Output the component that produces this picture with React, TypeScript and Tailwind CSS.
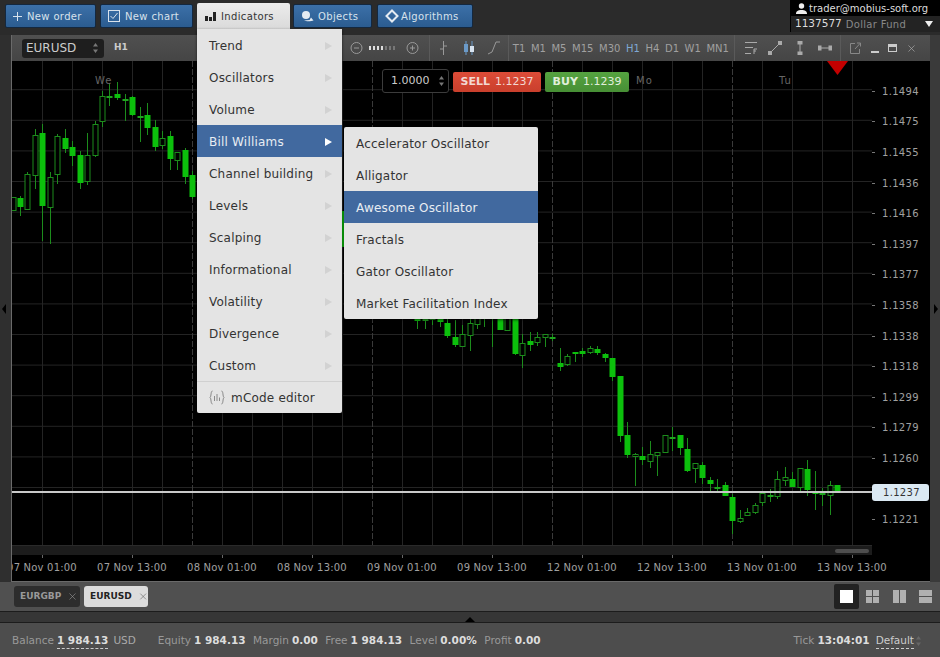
import { X } from "lucide-react";

const sans = "font-['DejaVu_Sans',sans-serif]";

// [x, wick top, wick bottom, body top, body bottom, filled]
const candles: [number, number, number, number, number, number][] = [
  [13, 198, 212, 198, 212, 0], [20, 197, 217, 199, 208, 1], [27, 173, 211, 175, 211, 0], [35, 130, 190, 136, 177, 0],
  [42, 125, 242, 134, 207, 1], [50, 173, 245, 178, 209, 0], [57, 135, 185, 137, 176, 0], [65, 130, 154, 139, 150, 1],
  [72, 142, 167, 148, 157, 1], [80, 152, 190, 156, 184, 1], [87, 134, 186, 156, 183, 0], [95, 122, 158, 125, 157, 0],
  [102, 92, 128, 97, 123, 0], [109, 85, 107, 97, 98, 1], [117, 83, 101, 95, 99, 1], [125, 95, 122, 100, 101, 1],
  [132, 97, 117, 98, 116, 1], [140, 108, 143, 117, 118, 1], [147, 104, 136, 116, 129, 1], [155, 121, 152, 128, 148, 1],
  [162, 132, 150, 139, 147, 0], [170, 132, 171, 137, 160, 1], [177, 153, 171, 153, 162, 0], [185, 149, 185, 151, 178, 1],
  [192, 172, 200, 176, 198, 1], [342, 212, 248, 212, 248, 1],
  [417, 310, 330, 310, 322, 1], [425, 310, 330, 320, 321, 1], [432, 310, 326, 310, 321, 0], [440, 310, 328, 319, 323, 1],
  [447, 320, 339, 324, 337, 1], [455, 321, 348, 338, 346, 1], [462, 326, 348, 335, 348, 0], [470, 318, 352, 324, 337, 0],
  [477, 310, 330, 318, 326, 0], [484, 312, 328, 318, 319, 1], [492, 312, 348, 318, 319, 1], [500, 312, 331, 312, 331, 1],
  [507, 312, 332, 312, 332, 0], [515, 312, 356, 312, 355, 1], [522, 335, 369, 344, 357, 0], [530, 333, 352, 342, 346, 1],
  [537, 333, 347, 338, 344, 0], [545, 335, 348, 335, 339, 0], [552, 335, 342, 338, 339, 1], [560, 349, 372, 364, 368, 1],
  [567, 355, 367, 357, 366, 0], [575, 354, 363, 353, 355, 1], [582, 349, 358, 352, 355, 1], [590, 347, 355, 349, 354, 0],
  [597, 347, 356, 350, 354, 1], [605, 354, 363, 355, 359, 1], [612, 359, 382, 359, 378, 1], [620, 377, 443, 377, 437, 1],
  [627, 423, 459, 436, 456, 1], [635, 454, 487, 455, 458, 0], [642, 448, 466, 457, 461, 1], [650, 442, 469, 455, 463, 0],
  [657, 453, 477, 453, 457, 0], [665, 436, 454, 436, 454, 0], [672, 428, 452, 438, 439, 1], [680, 436, 456, 436, 449, 1],
  [687, 439, 473, 450, 472, 1], [695, 464, 484, 464, 470, 0], [702, 463, 485, 466, 479, 1], [710, 478, 493, 481, 485, 1],
  [717, 480, 492, 488, 489, 1], [725, 483, 497, 486, 497, 1], [732, 495, 535, 498, 522, 1], [740, 511, 524, 519, 523, 0],
  [747, 509, 517, 513, 517, 0], [755, 504, 515, 506, 514, 0], [762, 492, 507, 494, 504, 0], [770, 490, 503, 496, 497, 1],
  [777, 472, 500, 480, 498, 0], [785, 468, 487, 478, 482, 0], [792, 473, 488, 480, 488, 1], [800, 469, 492, 469, 489, 0],
  [807, 461, 497, 470, 491, 1], [815, 472, 511, 493, 495, 1], [822, 489, 507, 494, 495, 1], [830, 482, 516, 486, 497, 0],
  [837, 486, 492, 486, 492, 1],
];

const prices = ["1.1494", "1.1475", "1.1455", "1.1436", "1.1416", "1.1397", "1.1377", "1.1358", "1.1338", "1.1318", "1.1299", "1.1279", "1.1260", "", "1.1221"];
const times = ["07 Nov 01:00", "07 Nov 13:00", "08 Nov 01:00", "08 Nov 13:00", "09 Nov 01:00", "09 Nov 13:00", "12 Nov 01:00", "12 Nov 13:00", "13 Nov 01:00", "13 Nov 13:00"];
const periods = ["T1", "M1", "M5", "M15", "M30", "H1", "H4", "D1", "W1", "MN1"];
const mainMenu = ["Trend", "Oscillators", "Volume", "Bill Williams", "Channel building", "Levels", "Scalping", "Informational", "Volatility", "Divergence", "Custom"];
const subMenu = ["Accelerator Oscillator", "Alligator", "Awesome Oscillator", "Fractals", "Gator Oscillator", "Market Facilitation Index"];

function TopButton({ icon, label, width }: { icon: React.ReactNode; label: string; width: string }) {
  return (
    <div className={`${width} h-[24px] flex items-center gap-[5px] pl-[7px] rounded-[2px] border border-[#14283f] bg-gradient-to-b from-[#3c70a8] to-[#2b5c90] text-[#d8e2ec] text-[10px] tracking-[0.35px]`}>
      {icon}
      <span>{label}</span>
    </div>
  );
}

function Stepper({ className }: { className: string }) {
  return (
    <svg width="7" height="12" viewBox="0 0 7 12" className={className}>
      <path d="M3.5 1 6 4.5H1z M3.5 11 6 7.5H1z" fill="currentColor" />
    </svg>
  );
}

function ChartCanvas() {
  const verticals = Array.from({ length: 29 }, (_, i) => 30 + i * 30);
  const horizontals = Array.from({ length: 16 }, (_, i) => 29 + i * 30.6);
  return (
    <svg width="860" height="484" viewBox="12 62 860 484" className="block">
      <rect x="12" y="62" width="860" height="484" fill="#000" />
      {horizontals.map((y) => (
        <line key={y} x1="12" x2="872" y1={y + 0.5} y2={y + 0.5} stroke="#242424" />
      ))}
      {verticals.map((v) => {
        const x = v + 12;
        const major = (x - 12) % 180 === 0;
        return <line key={v} x1={x + 0.5} x2={x + 0.5} y1="62" y2="546" stroke={major ? "#3a3a3a" : "#242424"} strokeDasharray={major ? "6 2" : undefined} />;
      })}
      {candles.map(([x, top, bottom, bodyTop, bodyBottom, filled]) => (
        <g key={x}>
          <line x1={x + 0.5} x2={x + 0.5} y1={top} y2={bottom} stroke="#1c8c1c" />
          {bodyBottom - bodyTop < 2 ? (
            <rect x={x - 2.5} y={bodyTop} width="6" height="2" fill="#1fa51f" />
          ) : filled ? (
            <rect x={x - 2.5} y={bodyTop} width="6" height={bodyBottom - bodyTop} fill="#0cc00c" />
          ) : (
            <rect x={x - 2} y={bodyTop + 0.5} width="5" height={bodyBottom - bodyTop - 1} fill="#000" stroke="#1c8c1c" />
          )}
        </g>
      ))}
      <rect x="12" y="492" width="860" height="2" fill="#c8c8c8" />
      <path d="M827 62h21l-10.5 14z" fill="#c40000" />
    </svg>
  );
}

function Toolbar() {
  return (
    <div className="h-[26px] flex items-center bg-gradient-to-b from-[#505050] to-[#454545] text-[#aaa] text-[10px]">
      <div className={`ml-[10px] w-[82px] h-[19px] rounded-[3px] bg-[#1e1e1e] flex items-center justify-between px-[4px] text-[12px] text-[#ccc] ${sans}`}>
        <span>EURUSD</span>
        <Stepper className="text-[#777] mr-[1px]" />
      </div>
      <span className={`ml-[10px] font-bold text-[9px] text-[#ccc] ${sans}`}>H1</span>
      {/* the part under the open menu stays empty */}
      <div className="w-[215px]" />
      <svg width="76" height="16" viewBox="0 0 76 16" className="ml-[6px] text-[#999]" fill="none" stroke="currentColor">
        <circle cx="7.5" cy="8" r="5.5" />
        <path d="M5 8h5" />
        <circle cx="63.5" cy="8" r="5.5" />
        <path d="M61 8h5M63.5 5.5v5" />
        <path d="M21 6v4M25 6v4M29 6v4M33 6v4" stroke="#ddd" strokeWidth="2" />
        <path d="M37 6v4M41 6v4M45 6v4" stroke="#777" strokeWidth="2" />
      </svg>
      <div className="ml-[4px] w-px h-[26px] bg-[#5a5a5a]" />
      <svg width="14" height="16" viewBox="0 0 14 16" className="ml-[6px] text-[#999]" fill="none" stroke="currentColor">
        <path d="M7.5 1v14M4 9h3.5M7.5 6H11" />
      </svg>
      <svg width="12" height="16" viewBox="0 0 12 16" className="ml-[13px]">
        <path d="M3 1v14M9 1v14" stroke="#6b9ac8" />
        <rect x="1" y="4" width="4" height="8" fill="#6b9ac8" />
        <rect x="7" y="6" width="4" height="6" fill="#d8e4f0" />
      </svg>
      <svg width="14" height="16" viewBox="0 0 14 16" className="ml-[12px] text-[#999]" fill="none" stroke="currentColor">
        <path d="M1 14 5 12 9 2 13 2" />
      </svg>
      <div className="ml-[7px] w-px h-[26px] bg-[#5a5a5a]" />
      <div className={`ml-[4px] flex items-center gap-[5.6px] text-[10px] text-[#a0a0a0] ${sans}`}>
        {periods.map((p) => (
          <span key={p} className={p === "H1" ? "text-[#7fa8d4]" : ""}>{p}</span>
        ))}
      </div>
      <div className="ml-[5px] w-px h-[26px] bg-[#5a5a5a]" />
      <svg width="14" height="14" viewBox="0 0 14 14" className="ml-[9px] text-[#aaa]" fill="none" stroke="currentColor">
        <path d="M1 1.5h12M1 6.5h8M1 12.5h6M10 8v5M10 8h3M10 10h2" />
      </svg>
      <svg width="14" height="14" viewBox="0 0 14 14" className="ml-[10px] text-[#aaa]" fill="none" stroke="currentColor">
        <path d="M2 12 12 2" />
        <rect x="0.5" y="10.5" width="3" height="3" fill="currentColor" />
        <rect x="10.5" y="0.5" width="3" height="3" fill="currentColor" />
      </svg>
      <svg width="6" height="14" viewBox="0 0 6 14" className="ml-[15px] text-[#aaa]" fill="none" stroke="currentColor">
        <path d="M3 2v10" />
        <rect x="1" y="0.5" width="4" height="2.5" fill="currentColor" />
        <rect x="1" y="11" width="4" height="2.5" fill="currentColor" />
      </svg>
      <svg width="14" height="6" viewBox="0 0 14 6" className="ml-[15px] text-[#aaa]" fill="none" stroke="currentColor">
        <path d="M2 3h10" />
        <rect x="0.5" y="1" width="2.5" height="4" fill="currentColor" />
        <rect x="11" y="1" width="2.5" height="4" fill="currentColor" />
      </svg>
      <div className="ml-[8px] w-px h-[26px] bg-[#5a5a5a]" />
      <svg width="11" height="12" viewBox="0 0 11 12" className="ml-[9px] text-[#888]" fill="none" stroke="currentColor">
        <path d="M5 1.5H.5v10h9V7M5 7l5-5.5M7 1h3.5v3.5" />
      </svg>
      <div className="ml-[10px] w-[8px] h-[2px] bg-[#ccc] mt-[7px]" />
      <div className="ml-[9px] w-[9px] h-[8px] border border-t-[3px] border-[#ccc]" />
      <X size={11} strokeWidth={1.5} className="ml-[9px] text-[#aaa]" />
    </div>
  );
}

function IndicatorMenu() {
  return (
    <>
      <div className={`absolute left-[197px] top-[29px] w-[145px] bg-[#e4e4e4] text-[#333] text-[12px] tracking-[0.2px] rounded-b-[2px] shadow-[0_1px_3px_rgba(0,0,0,0.6)] ${sans}`}>
        {mainMenu.map((item) => {
          const active = item === "Bill Williams";
          return (
            <div key={item} className={`h-[32px] pt-[1px] flex items-center justify-between pl-[12px] pr-[10px] ${active ? "bg-[#41699f] text-[#e8edf3]" : ""}`}>
              <span>{item}</span>
              <span className={`w-0 h-0 border-y-[4px] border-y-transparent border-l-[7px] ${active ? "border-l-white" : "border-l-[#d2d2d2]"}`} />
            </div>
          );
        })}
        <div className="h-[32px] border-t border-[#d0d0d0] flex items-center pl-[12px] gap-[6px]">
          <svg width="16" height="15" viewBox="0 0 16 15" fill="none" stroke="#8a8a8a">
            <path d="M3.5 1C1.5 1 2.5 6.5 1 7.5 2.5 8.5 1.5 14 3.5 14M12.5 1C14.5 1 13.5 6.5 15 7.5 13.5 8.5 14.5 14 12.5 14M5.5 6v5M8 4v7M10.500 7.500V11" />
          </svg>
          <span>mCode editor</span>
        </div>
      </div>
      <div className={`absolute left-[344px] top-[127px] w-[194px] bg-[#e4e4e4] text-[#333] text-[12px] tracking-[0.2px] rounded-[2px] shadow-[0_1px_3px_rgba(0,0,0,0.6)] ${sans}`}>
        {subMenu.map((item) => (
          <div key={item} className={`h-[32px] pt-[1px] flex items-center pl-[12px] ${item === "Awesome Oscillator" ? "bg-[#41699f] text-[#e8edf3]" : ""}`}>
            {item}
          </div>
        ))}
      </div>
    </>
  );
}

function OrderPanel() {
  return (
    <div className={`absolute left-[382px] top-[69px] flex items-center gap-[4px] text-[11px] ${sans}`}>
      <div className="w-[67px] h-[24px] rounded-[3px] bg-black border border-[#3c3c3c] flex items-center justify-between pl-[8px] pr-[3px] text-[#ccc]">
        <span>1.0000</span>
        <Stepper className="text-[#777]" />
      </div>
      <div className="mt-[2px] w-[88px] h-[20px] rounded-[2px] bg-gradient-to-b from-[#dd4c38] to-[#c93f2c] text-[#f2d8d2] flex items-center justify-center gap-[5px]">
        <b>SELL</b><span>1.1237</span>
      </div>
      <div className="mt-[2px] w-[84px] h-[20px] rounded-[2px] bg-gradient-to-b from-[#55a340] to-[#478f35] text-[#e0eedb] flex items-center justify-center gap-[5px]">
        <b>BUY</b><span>1.1239</span>
      </div>
    </div>
  );
}

function Stat({ label, value }: { label: string; value: string }) {
  return (
    <span className="flex items-baseline gap-[3px]">
      <span className="text-[#999]">{label}</span>
      <b className="text-[#ddd]">{value}</b>
    </span>
  );
}

export default function App() {
  return (
    <div className={`relative w-[940px] h-[657px] overflow-hidden bg-[#2b2b2b] flex flex-col ${sans}`}>
      {/* top bar */}
      <div className="h-[35px] flex shrink-0">
        <div className="flex-1 flex pl-[5px] pt-[4px]">
          <TopButton
            width="w-[91px]"
            label="New order"
            icon={<svg width="9" height="9" viewBox="0 0 9 9" stroke="#d8e2ec"><path d="M4.5 0v9M0 4.500h9" /></svg>}
          />
          <div className="ml-[4px]">
            <TopButton
              width="w-[93px]"
              label="New chart"
              icon={<svg width="12" height="12" viewBox="0 0 12 12" fill="none" stroke="#d8e2ec"><rect x=".5" y=".5" width="11" height="11" /><path d="M2.500 6 5 8.500 9.500 3" /></svg>}
            />
          </div>
          <div className="ml-[4px] w-[93px] h-[26px] -mt-[1px] flex items-center gap-[5px] pl-[8px] bg-gradient-to-b from-[#ececec] to-[#dadada] rounded-t-[2px] text-[#333] text-[10px] tracking-[0.35px]">
            <svg width="11" height="9" viewBox="0 0 11 9" fill="#222"><path d="M0 4h3v5H0zM4 5h3v4H4zM8 0h3v9H8z" /></svg>
            <span>Indicators</span>
          </div>
          <div className="ml-[3px]">
            <TopButton
              width="w-[79px]"
              label="Objects"
              icon={<svg width="13" height="12" viewBox="0 0 13 12" fill="#e4ebf2" className="-mr-[1px]"><circle cx="5" cy="5" r="4" /><path d="M3 10.500c2 1 7 1 9.500 0L10 7.500 8.500 10z" /></svg>}
            />
          </div>
          <div className="ml-[5px]">
            <TopButton
              width="w-[96px]"
              label="Algorithms"
              icon={<svg width="14" height="14" viewBox="0 0 14 14" fill="none" stroke="#e4ebf2" strokeWidth="2" className="-mr-[3px]"><path d="M7 1.500 12.500 7 7 12.500 1.500 7z" /></svg>}
            />
          </div>
        </div>
        <div className="w-[150px] h-[32px] border-l border-black whitespace-nowrap">
          <div className="h-[16px] bg-black flex items-center gap-[2px] pl-[5px] text-[10px] text-[#ddd]">
            <svg width="11" height="11" viewBox="0 0 11 11" fill="#eee"><circle cx="5.500" cy="3" r="2.700" /><path d="M0 11c0-3 2-4 5.500-4s5.500 1 5.500 4z" /></svg>
            <span>trader@mobius-soft.org</span>
          </div>
          <div className="h-[16px] bg-[#232323] flex items-center pl-[4px] pr-[7px]">
            <span className="text-[10.5px] text-[#ddd]">1137577</span>
            <span className="ml-[4px] text-[10px] text-[#888] tracking-[0.3px]">Dollar Fund</span>
            <span className="ml-auto w-0 h-0 border-x-[4px] border-x-transparent border-t-[6px] border-t-[#eee]" />
          </div>
        </div>
      </div>

      {/* chart window with its two side strips */}
      <div className="h-[547px] flex shrink-0">
        <div className="w-[11px] bg-[#2f2f2f] flex items-center">
          <span className="w-0 h-0 border-y-[5px] border-y-transparent border-r-[4px] border-r-black ml-[2px]" />
        </div>
        <div className="w-[919px] border-l border-[#6a6a6a] border-b flex flex-col bg-black">
          <Toolbar />
          <div className="flex h-[484px]">
            <ChartCanvas />
            <div className="flex-1 pt-[15px] text-[10px] text-[#a0a0a0] tracking-[0.3px] overflow-hidden">
              {prices.map((price, i) => (
                <div key={i} className="h-[30.6px] flex items-center gap-[5px]">
                  <span className={`w-[3px] h-px ${price ? "bg-[#777]" : ""}`} />
                  <span className="ml-[2px]">{price}</span>
                </div>
              ))}
            </div>
          </div>
          <div className="h-[10px] bg-[#1c1c1c] w-[860px] flex items-center justify-end pr-[3px] border-t border-[#2a2a2a]">
            <div className="w-[34px] h-[4px] rounded-full bg-[#4e4e4e]" />
          </div>
          <div className="h-[24px] overflow-hidden">
            <div className="flex -ml-[15px] text-[10px] text-[#a0a0a0] tracking-[0.2px]">
              {times.map((t) => (
                <div key={t} className="w-[90px] shrink-0 flex flex-col items-center">
                  <span className="w-px h-[3px] bg-[#666]" />
                  <span className="mt-[2px] whitespace-nowrap">{t}</span>
                </div>
              ))}
            </div>
          </div>
        </div>
        <div className="flex-1 bg-[#3a3a3a] flex items-center">
          <span className="w-0 h-0 border-y-[5px] border-y-transparent border-l-[4px] border-l-black ml-[4px]" />
        </div>
      </div>

      {/* tabs */}
      <div className="h-[29px] shrink-0 bg-[#505050] flex items-center pl-[14px] pr-[8px] text-[9px] font-bold">
        <div className="w-[66px] h-[21px] rounded-[3px] bg-[#2d2d2d] text-[#999] flex items-center pl-[6px] gap-[6px]">
          EURGBP <X size={11} strokeWidth={1.3} />
        </div>
        <div className="ml-[4px] w-[64px] h-[21px] rounded-[3px] bg-[#dcdcdc] text-[#222] flex items-center pl-[6px] gap-[6px]">
          EURUSD <X size={11} strokeWidth={1.3} className="text-[#555]" />
        </div>
        <div className="ml-auto w-[25px] h-[25px] rounded-[2px] bg-[#222] flex items-center justify-center">
          <div className="w-[13px] h-[13px] bg-white" />
        </div>
        <svg width="13" height="13" viewBox="0 0 13 13" fill="#b0b0b0" className="ml-[7px]"><path d="M0 0h6v6H0zM7 0h6v6H7zM0 7h6v6H0zM7 7h6v6H7z" /></svg>
        <svg width="13" height="13" viewBox="0 0 13 13" fill="#b0b0b0" className="ml-[14px]"><path d="M0 0h6v13H0zM7 0h6v13H7z" /></svg>
        <svg width="13" height="13" viewBox="0 0 13 13" fill="#b0b0b0" className="ml-[13px]"><path d="M0 0h13v6H0zM0 7h13v6H0z" /></svg>
      </div>

      {/* divider with collapse arrow */}
      <div className="h-[12px] shrink-0 bg-[#363636] border-y border-[#1c1c1c] flex justify-center items-end">
        <span className="w-0 h-0 border-x-[5px] border-x-transparent border-b-[5px] border-b-black" />
      </div>

      {/* status bar */}
      <div className="flex-1 bg-[#4d4d4d] flex items-center pt-[2px] pl-[12px] pr-[18px] text-[10.5px]">
        <span className="flex items-baseline gap-[3px] mr-[22px]">
          <span className="text-[#999]">Balance</span>
          <b className="text-[#ddd] border-b border-dashed border-[#ccc]">1 984.13</b>
          <span className="text-[#aaa] ml-[2px]">USD</span>
        </span>
        <span className="flex gap-[7.5px]">
          <Stat label="Equity" value="1 984.13" />
          <Stat label="Margin" value="0.00" />
          <Stat label="Free" value="1 984.13" />
          <Stat label="Level" value="0.00%" />
          <Stat label="Profit" value="0.00" />
        </span>
        <span className="ml-auto flex items-baseline gap-[6px]">
          <Stat label="Tick" value="13:04:01" />
          <span className="text-[#ccc] border-b border-dashed border-[#ccc]">Default</span>
        </span>
        <Stepper className="ml-[1px] text-[#666]" />
      </div>

      {/* overlays */}
      <OrderPanel />
      <div className="absolute left-[95px] top-[73px] text-[10px] text-[#666] tracking-[1px]">We</div>
      <div className="absolute left-[636px] top-[73px] text-[10px] text-[#666] tracking-[1px]">Mo</div>
      <div className="absolute left-[779px] top-[73px] text-[10px] text-[#666] tracking-[1px]">Tu</div>
      <div className="absolute left-[872px] top-[484px] w-[57px] h-[17px] rounded-[3px] bg-[#dbe9f3] text-[#333] text-[10px] tracking-[0.3px] flex items-center pl-[11px]">1.1237</div>
      <IndicatorMenu />
    </div>
  );
}
